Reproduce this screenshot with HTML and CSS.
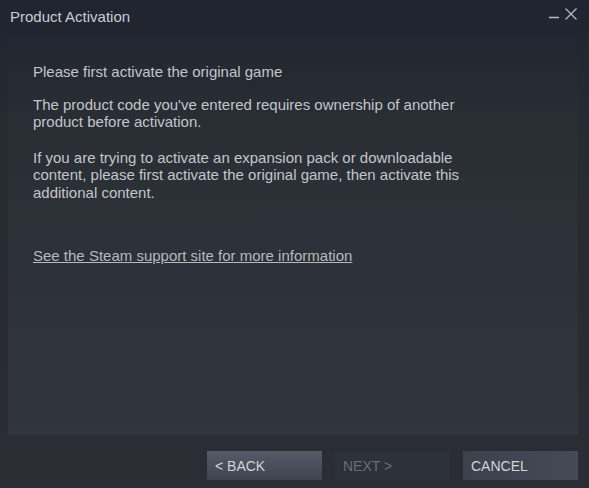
FILE: index.html
```html
<!DOCTYPE html>
<html>
<head>
<meta charset="utf-8">
<link rel="stylesheet" href="styles.css">
</head>
<body>
<div class="window">
  <div class="titlebar">
    <div class="title">Product Activation</div>
    <div class="controls">
      <svg class="min" width="12" height="12" viewBox="0 0 12 12"><path d="M1 10.5H11" stroke="#b9bcc2" stroke-width="1.5"/></svg>
      <svg class="close" width="14" height="14" viewBox="0 0 14 14"><path d="M1.5 1.5L12.5 12.5M12.5 1.5L1.5 12.5" stroke="#b9bcc2" stroke-width="1.2"/></svg>
    </div>
  </div>
  <div class="panel">
    <p class="p1">Please first activate the original game</p>
    <p class="p2">The product code you've entered requires ownership of another<br>product before activation.</p>
    <p class="p3">If you are trying to activate an expansion pack or downloadable<br>content, please first activate the original game, then activate this<br>additional content.</p>
    <a class="link" href="#">See the Steam support site for more information</a>
  </div>
  <div class="footer">
    <button class="btn back">&lt; BACK</button>
    <button class="btn next" disabled>NEXT &gt;</button>
    <button class="btn cancel">CANCEL</button>
  </div>
</div>
</body>
</html>
```
FILE: styles.css
```css
html, body {
  margin: 0;
  padding: 0;
  width: 589px;
  height: 488px;
  overflow: hidden;
}
body {
  font-family: Arial, "Liberation Sans", sans-serif;
  background: #23272e;
}
.window {
  width: 589px;
  height: 488px;
  display: flex;
  flex-direction: column;
  background: linear-gradient(to bottom, #1f2430 0px, #262a31 120px, #2a2d33 488px);
}
.titlebar {
  height: 34px;
  display: flex;
  align-items: flex-start;
  justify-content: space-between;
}
.title {
  color: #c9ccd3;
  font-size: 15px;
  padding: 8px 0 0 10px;
}
.controls {
  display: flex;
  align-items: flex-start;
  gap: 4px;
  padding: 7px 11px 0 0;
}
.panel {
  margin: 0 11px 0 8px;
  height: 401px;
  box-sizing: border-box;
  padding: 29px 0 0 25px;
  background: linear-gradient(to bottom, rgba(40,44,51,0) 0px, #2b2f36 150px, #31353d 401px);
  color: #c3c6cb;
  font-size: 15px;
  line-height: 17.5px;
}
.panel p {
  margin: 0;
}
.p1 { margin-bottom: 15px !important; }
.p2 { margin-bottom: 18px !important; }
.link {
  display: inline-block;
  margin-top: 46px;
  color: #b6b9be;
  text-decoration: underline;
}
.footer {
  display: flex;
  justify-content: flex-end;
  gap: 13px;
  padding: 16px 11px 0 0;
}
.btn {
  width: 115px;
  height: 29px;
  border: none;
  padding: 0 0 0 8px;
  text-align: left;
  font-family: Arial, "Liberation Sans", sans-serif;
  font-size: 14px;
  color: #d1d4d9;
}
.back {
  background: linear-gradient(to bottom, #555b68, #3e434e);
}
.next {
  background: #2d3139;
  color: #6b6f77;
}
.cancel {
  background: linear-gradient(to right, #3c414c, #444a56);
}
```
